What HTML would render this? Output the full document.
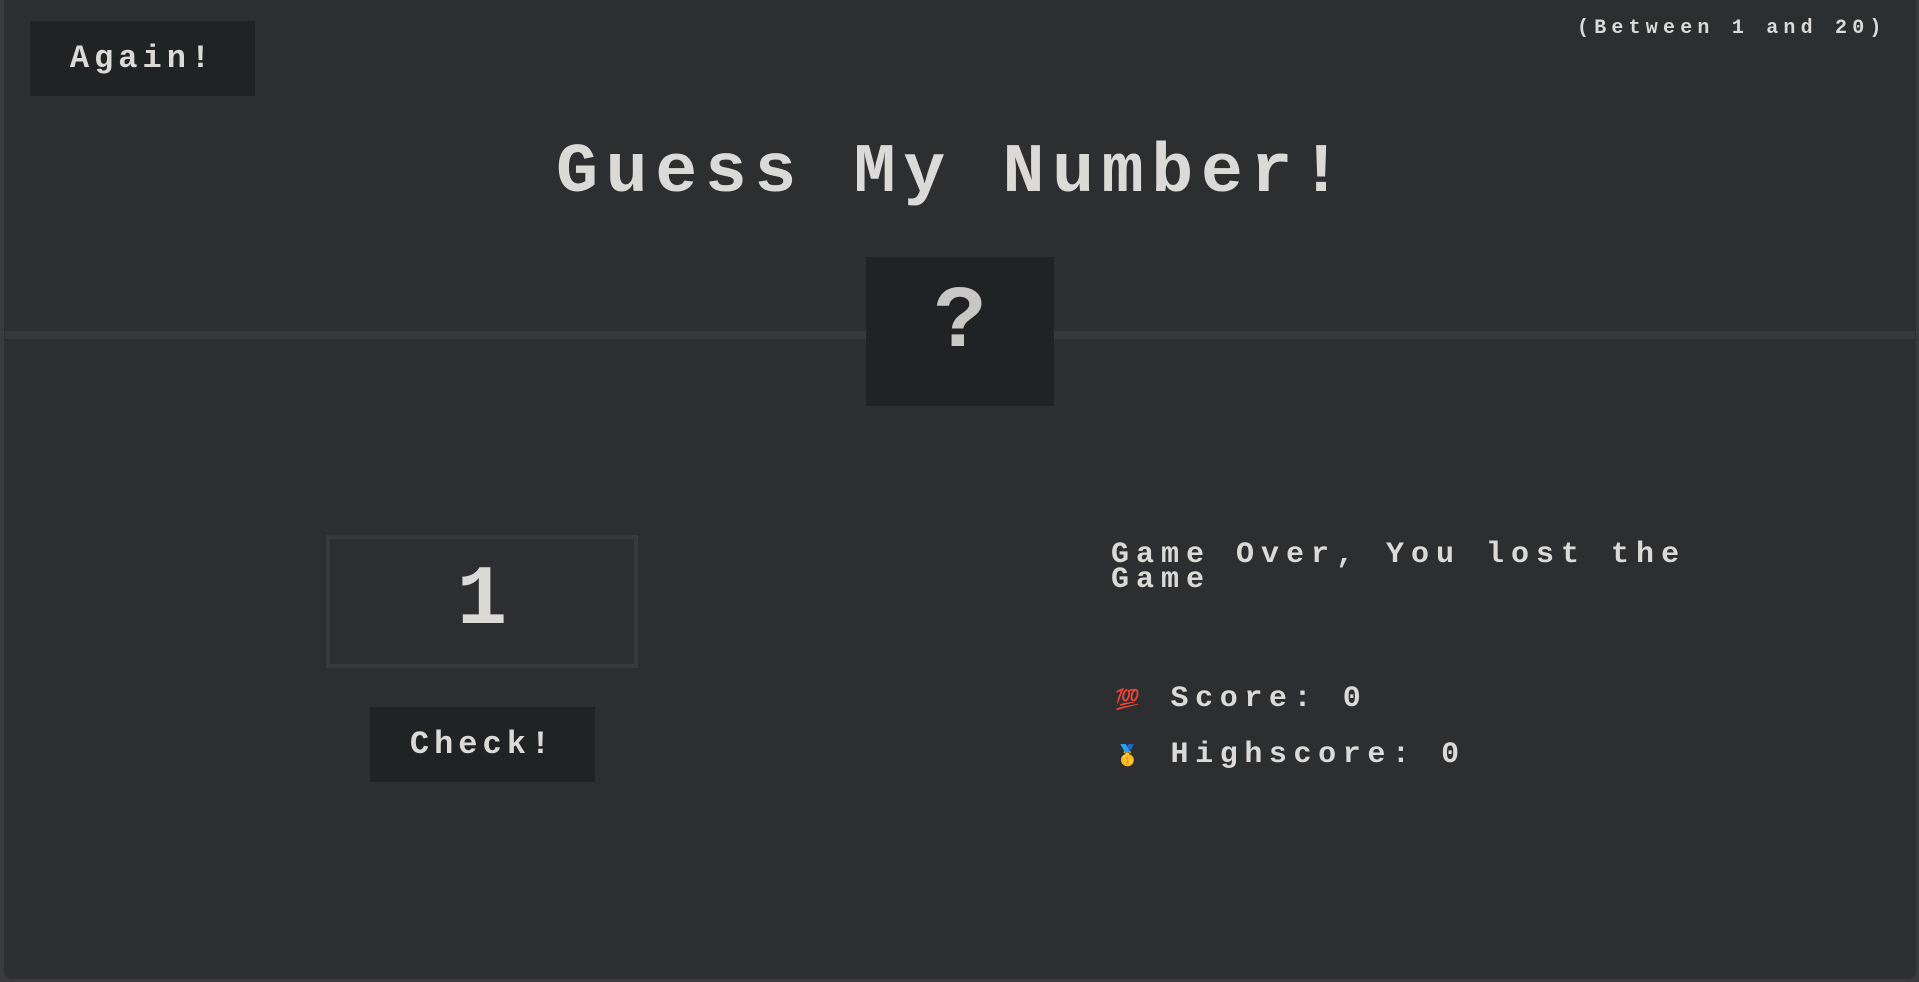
<!DOCTYPE html>
<html><head><meta charset="utf-8"><style>
html,body{margin:0;padding:0;width:1919px;height:982px;overflow:hidden;background:#3b3b3d;}
.c{position:absolute;left:4px;top:0;width:1912px;height:979px;background:#2d2e30;border-radius:0 0 8px 8px;}
*{font-family:"Liberation Mono",monospace;font-weight:bold;color:#dcdad7;}
.a{position:absolute;}
.btn{background:#212224;display:flex;align-items:center;justify-content:center;font-size:32px;letter-spacing:5px;}
</style></head><body>
<div class="c"></div>
<div class="a btn" style="left:30px;top:21px;width:225px;height:75px;">Again!</div>
<div class="a" style="left:1577px;top:17px;font-size:20px;letter-spacing:5.2px;white-space:nowrap;">(Between 1 and 20)</div>
<div class="a" style="left:556px;top:134px;font-size:70px;letter-spacing:7.6px;white-space:nowrap;line-height:80px;">Guess My Number!</div>
<div class="a" style="left:5px;top:331px;width:1910px;height:8px;background:#38393b;"></div>
<div class="a" style="left:866px;top:257px;width:188px;height:149px;background:#212224;display:flex;align-items:center;justify-content:center;font-size:88px;color:#c9c7c4;padding-bottom:16px;box-sizing:border-box;">?</div>
<div class="a" style="left:326px;top:535px;width:304px;height:125px;border:4px solid #38393b;display:flex;align-items:center;justify-content:center;font-size:84px;">1</div>
<div class="a btn" style="left:370px;top:707px;width:225px;height:75px;">Check!</div>
<div class="a" style="left:1111px;top:543px;font-size:30px;line-height:25px;letter-spacing:7px;width:620px;">Game Over, You lost the Game</div>
<div class="a" style="left:1115px;top:684px;font-size:30px;letter-spacing:6.6px;white-space:nowrap;line-height:30px;"><span style="font-size:20px;letter-spacing:0;color:#e0245e;margin-right:6px;">💯</span> Score: 0</div>
<div class="a" style="left:1115px;top:740px;font-size:30px;letter-spacing:6.6px;white-space:nowrap;line-height:30px;"><span style="font-size:20px;letter-spacing:0;margin-right:6px;">🥇</span> Highscore: 0</div>
</body></html>
